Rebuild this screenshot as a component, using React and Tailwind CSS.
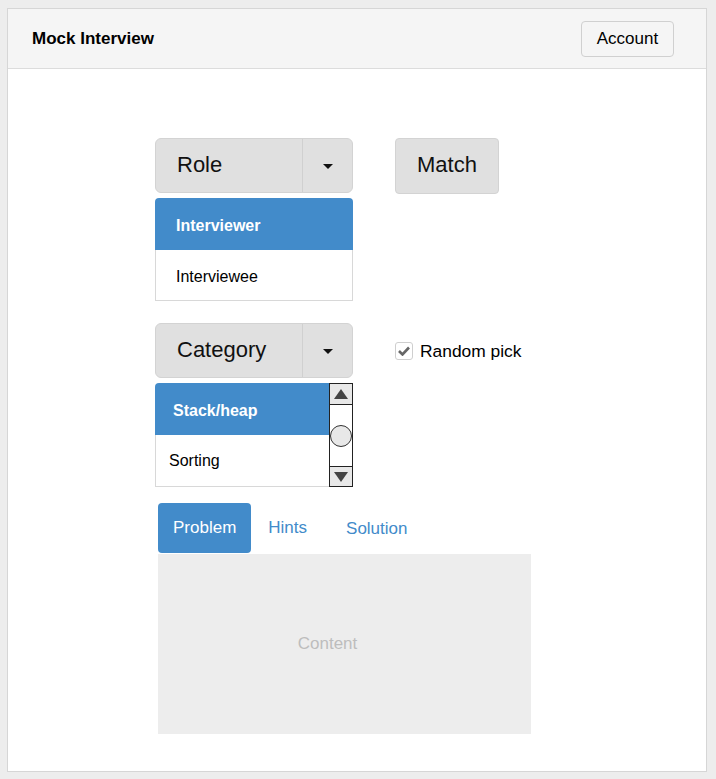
import { useState } from "react";

const font = { fontFamily: '"Liberation Sans", Arial, sans-serif' };

function Caret() {
  return (
    <svg width="10" height="5" viewBox="0 0 10 5" className="block">
      <path d="M0 0 L10 0 L5 5 Z" fill="#111" />
    </svg>
  );
}

function SplitButton({ label }) {
  return (
    <div className="flex h-[55px] w-[198px] rounded-[6px] border border-[#d3d3d3] bg-[#e0e0e0]">
      <div className="flex w-[146px] items-center pb-[2px] pl-[21px] text-[22px] text-[#111]">{label}</div>
      <div className="flex flex-1 items-center justify-center border-l border-[#d0d0d0] pl-[1px] pt-[1px]">
        <Caret />
      </div>
    </div>
  );
}

function ScrollBar() {
  return (
    <div className="flex w-[24px] flex-col border border-[#222] bg-white">
      <div className="flex h-[21px] items-center justify-center border-b border-[#222] bg-[#e8e8e8]">
        <svg width="14" height="10" viewBox="0 0 14 10">
          <path d="M0 10 L7 0 L14 10 Z" fill="#444" />
        </svg>
      </div>
      <div className="flex flex-1 items-center justify-center">
        <div className="h-[22px] w-[22px] rounded-full border border-[#333] bg-[#e8e8e8]" />
      </div>
      <div className="flex h-[20px] items-center justify-center border-t border-[#222] bg-[#e8e8e8]">
        <svg width="14" height="10" viewBox="0 0 14 10">
          <path d="M0 0 L14 0 L7 10 Z" fill="#444" />
        </svg>
      </div>
    </div>
  );
}

export default function App() {
  const [tab, setTab] = useState("Problem");
  const [randomPick, setRandomPick] = useState(true);

  return (
    <div className="min-h-[779px] bg-[#ededed] pb-[7px] pl-[7px] pr-[9px] pt-[8px]" style={font}>
      <div className="border border-[#d6d6d6] bg-white">
        <div className="flex h-[60px] items-center justify-between border-b border-[#dcdcdc] bg-[#f5f5f5] pl-[24px] pr-[32px]">
          <span className="pt-[1px] text-[17px] font-bold text-black">Mock Interview</span>
          <button
            type="button"
            className="mt-[1px] h-[36px] w-[93px] rounded-[4px] border border-[#d0d0d0] bg-[#f5f5f5] text-[17px] text-black"
          >
            Account
          </button>
        </div>

        <div className="pb-[37px] pl-[147px] pt-[69px]">
          <div className="flex gap-[42px]">
            <div className="w-[198px]">
              <SplitButton label="Role" />
              <div className="mt-[5px]">
                <div className="flex h-[52px] items-center rounded-t-[4px] bg-[#428bca] pl-[21px] pt-[3px] text-[16px] font-bold text-white">
                  Interviewer
                </div>
                <div className="flex h-[51px] items-center border border-t-0 border-[#d8d8d8] pl-[20px] pt-[3px] text-[16px] text-black">
                  Interviewee
                </div>
              </div>
            </div>
            <button
              type="button"
              className="h-[56px] w-[104px] rounded-[4px] border border-[#d3d3d3] bg-[#e0e0e0] pb-[3px] text-[22px] text-[#111]"
            >
              Match
            </button>
          </div>

          <div className="mt-[22px] flex gap-[42px]">
            <div className="w-[198px]">
              <SplitButton label="Category" />
              <div className="mt-[5px] flex h-[104px]">
                <div className="flex flex-1 flex-col">
                  <div className="flex h-[52px] items-center rounded-tl-[4px] bg-[#428bca] pl-[18px] pt-[3px] text-[16px] font-bold text-white">
                    Stack/heap
                  </div>
                  <div className="flex h-[52px] items-center border-b border-l border-[#d8d8d8] pl-[13px] pt-[1px] text-[16px] text-black">
                    Sorting
                  </div>
                </div>
                <ScrollBar />
              </div>
            </div>
            <label className="mt-[19px] flex h-[18px] cursor-pointer items-center gap-[7px] text-[17.4px] text-black">
              <span
                onClick={() => setRandomPick(!randomPick)}
                className="flex h-[18px] w-[18px] items-center justify-center rounded-[3px] border border-[#cfcfcf] bg-white"
              >
                {randomPick ? (
                  <svg width="12" height="10" viewBox="0 0 12 10">
                    <path d="M1 5 L4.5 8.5 L11 1.5" stroke="#666" strokeWidth="2.6" fill="none" />
                  </svg>
                ) : null}
              </span>
              Random pick
            </label>
          </div>

          <div className="ml-[3px] mt-[16px] w-[373px]">
            <div className="flex h-[50px] items-stretch">
              {["Problem", "Hints", "Solution"].map((name) => (
                <button
                  key={name}
                  type="button"
                  onClick={() => setTab(name)}
                  className={
                    tab === name
                      ? "rounded-[4px] bg-[#428bca] px-[15px] pb-[1px] text-[17px] text-white"
                      : name === "Hints"
                        ? "pb-[1px] pl-[17px] pr-[21px] text-[17px] text-[#428bca]"
                        : "pl-[18px] pr-[20px] pt-[1px] text-[17px] text-[#428bca]"
                  }
                >
                  {name}
                </button>
              ))}
            </div>
            <div className="mt-[1px] flex h-[180px] items-center justify-center bg-[#ededed] pr-[34px] text-[17px] text-[#bdbdbd]">
              Content
            </div>
          </div>
        </div>
      </div>
    </div>
  );
}
